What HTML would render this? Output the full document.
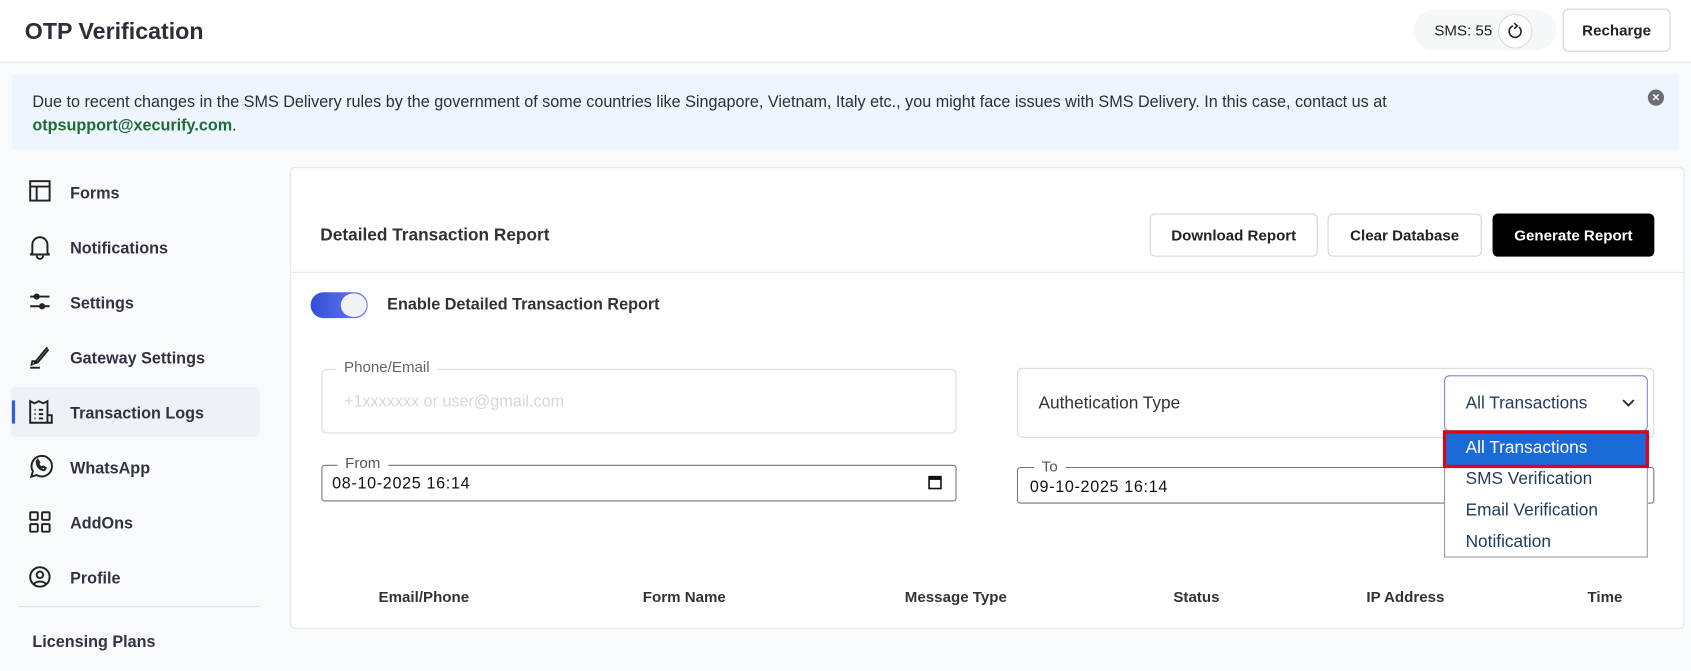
<!DOCTYPE html>
<html><head><meta charset="utf-8"><style>
*{box-sizing:border-box;margin:0;padding:0}
html,body{width:1691px;height:671px;overflow:hidden;background:#f8fafc}
#w{position:absolute;left:0;top:0;width:1568px;height:622px;transform:scale(1.07844);transform-origin:0 0;font-family:"Liberation Sans",sans-serif;color:#222;background:#f8fafd}
.a{position:absolute}
.b{font-weight:bold}
.nav{position:absolute;left:26px;font-size:15px;font-weight:bold;color:#2f3440}
.ic{position:absolute;left:26px}
.btn{position:absolute;top:198px;height:40px;border:1px solid #d0d4da;border-radius:5px;background:#fff;font-size:14px;font-weight:bold;display:flex;align-items:center;justify-content:center}
.th{position:absolute;top:545px;font-size:14px;font-weight:bold;color:#333}
</style></head><body><div id="w">
<div class="a" style="left:0;top:0;width:1568px;height:58px;background:#fff;border-bottom:1px solid #e6e8ec"></div>
<div class="a b" style="left:23px;top:17px;font-size:21.5px;color:#2a2f38">OTP Verification</div>
<div class="a" style="left:1311px;top:9px;width:132px;height:38px;border-radius:19px;background:#f6f7f9"></div>
<div class="a" style="left:1330px;top:20px;font-size:14px">SMS: 55</div>
<div class="a" style="left:1389px;top:13px;width:32px;height:32px;border-radius:50%;border:1px solid #d8dbe0;background:#fff"></div>
<svg class="a" style="left:1396px;top:20px" width="18" height="18" viewBox="0 0 18 18"><path d="M12.5 5A5.5 5.5 0 1 1 7 4" fill="none" stroke="#222" stroke-width="1.5"/><path d="M8 1.5l3 2.5-3 2.5" fill="none" stroke="#222" stroke-width="1.5"/></svg>
<div class="a b" style="left:1449px;top:8px;width:100px;height:40px;border:1px solid #d0d4da;border-radius:5px;background:#fff;font-size:14px;display:flex;align-items:center;justify-content:center">Recharge</div>
<div class="a" style="left:11px;top:69px;width:1546px;height:70px;background:#eef5fd"></div>
<div class="a" style="left:30px;top:84px;font-size:15px;line-height:22px;color:#2a2f38">Due to recent changes in the SMS Delivery rules by the government of some countries like Singapore, Vietnam, Italy etc., you might face issues with SMS Delivery. In this case, contact us at<br><span class="b" style="color:#1e6b38">otpsupport@xecurify.com</span>.</div>
<div class="a" style="left:1528px;top:83px;width:15px;height:15px;border-radius:50%;background:#6b6f75;color:#fff;font-size:12px;line-height:15px;text-align:center;font-weight:bold">×</div>
<div class="a" style="left:10px;top:359px;width:231px;height:46px;background:#eef1f6;border-radius:4px"></div>
<div class="a" style="left:11px;top:371px;width:3px;height:22px;background:#2f5ee0;border-radius:2px"></div>
<svg class="ic" style="top:166px" width="22" height="22" viewBox="0 0 22 22" fill="none" stroke="#222" stroke-width="1.8"><rect x="2" y="2" width="18" height="18"/><path d="M2 7h18M8 7v13"/></svg>
<div class="nav" style="left:65px;top:171px">Forms</div>
<svg class="ic" style="top:217px" width="22" height="24" viewBox="0 0 22 24" fill="none" stroke="#222" stroke-width="1.8"><path d="M4 18V10a7 7 0 0 1 14 0v8l2 1H2z"/><path d="M8 20a3 3 0 0 0 6 0"/></svg>
<div class="nav" style="left:65px;top:222px">Notifications</div>
<svg class="ic" style="top:270px" width="22" height="20" viewBox="0 0 22 20" stroke="#222" stroke-width="1.8"><path d="M2 5h18M2 14h18"/><circle cx="8" cy="5" r="2" fill="#222"/><circle cx="13" cy="14" r="2" fill="#222"/></svg>
<div class="nav" style="left:65px;top:273px">Settings</div>
<svg class="ic" style="top:320px" width="22" height="22" viewBox="0 0 22 22" fill="none" stroke="#222" stroke-width="1.8"><path d="M18 2L8 14l-2 3 3-1 10-12M3 19l1-4 4 0M2 21h9"/></svg>
<div class="nav" style="left:65px;top:324px">Gateway Settings</div>
<svg class="ic" style="top:368px" width="26" height="28" viewBox="0 0 26 28" fill="none" stroke="#222" stroke-width="1.8"><path d="M2 4l4 2 4-2 4 2 4-2v20H2zM18 17h4v7h-4"/><path d="M6 12h1M10 12h4M6 16h1M10 16h4M6 20h1M10 20h4"/></svg>
<div class="nav" style="left:65px;top:375px">Transaction Logs</div>
<svg class="ic" style="top:421px" width="23" height="23" viewBox="0 0 23 23" fill="none" stroke="#222" stroke-width="1.8"><path d="M3 21l1.5-5A9.5 9.5 0 1 1 8 19.5z"/><path d="M8 7c0 4 3 8 7 8l1.5-2-2.5-1.5-1 1c-1.5-.5-3-2-3.5-3.5l1-1L9 5.5z"/></svg>
<div class="nav" style="left:65px;top:426px">WhatsApp</div>
<svg class="ic" style="top:473px" width="22" height="22" viewBox="0 0 22 22" fill="none" stroke="#222" stroke-width="1.8"><rect x="2" y="2" width="7" height="7" rx="1"/><rect x="13" y="2" width="7" height="7" rx="1"/><rect x="2" y="13" width="7" height="7" rx="1"/><rect x="13" y="13" width="7" height="7" rx="1"/></svg>
<div class="nav" style="left:65px;top:477px">AddOns</div>
<svg class="ic" style="top:524px" width="22" height="22" viewBox="0 0 22 22" fill="none" stroke="#222" stroke-width="1.8"><circle cx="11" cy="11" r="9"/><circle cx="11" cy="9" r="3"/><path d="M5.5 17.5c2-3 9-3 11 0"/></svg>
<div class="nav" style="left:65px;top:528px">Profile</div>
<div class="a" style="left:17px;top:562px;width:224px;height:1px;background:#dcdfe4"></div>
<div class="nav" style="left:30px;top:587px">Licensing Plans</div>
<div class="a" style="left:269px;top:155px;width:1293px;height:428px;background:#fff;border:1px solid #e4e6ea;border-radius:4px"></div>
<div class="a" style="left:270px;top:252px;width:1292px;height:1px;background:#e4e6ea"></div>
<div class="a b" style="left:297px;top:210px;font-size:16px;color:#333">Detailed Transaction Report</div>
<div class="btn" style="left:1066px;width:156px">Download Report</div>
<div class="btn" style="left:1231px;width:143px">Clear Database</div>
<div class="btn" style="left:1384px;width:150px;background:#000;color:#fff;border-color:#000">Generate Report</div>
<div class="a" style="left:288px;top:271px;width:53px;height:24px;border-radius:12px;background:linear-gradient(90deg,#2f4fd8,#6d7cf0)"></div>
<div class="a" style="left:316px;top:272px;width:24px;height:22px;border-radius:50%;background:#f2f2f4"></div>
<div class="a b" style="left:359px;top:274px;font-size:15px;color:#333">Enable Detailed Transaction Report</div>
<div class="a" style="left:298px;top:342px;width:589px;height:60px;border:1px solid #d6dae0;border-radius:5px"></div>
<div class="a" style="left:312px;top:332px;padding:0 7px;background:#fff;font-size:14px;color:#666">Phone/Email</div>
<div class="a" style="left:319px;top:364px;font-size:15px;color:#d5d7db">+1xxxxxxx or user@gmail.com</div>
<div class="a" style="left:298px;top:431px;width:589px;height:34px;border:1px solid #767676;border-radius:3px"></div>
<div class="a" style="left:313px;top:421px;padding:0 7px;background:#fff;font-size:14px;color:#555">From</div>
<div class="a" style="left:308px;top:440px;font-size:15px;letter-spacing:.6px;color:#111">08-10-2025 16:14</div>
<svg class="a" style="left:860px;top:440px" width="14" height="14" viewBox="0 0 14 14"><rect x="1.5" y="2" width="11" height="11" fill="none" stroke="#111" stroke-width="1.5"/><rect x="1.5" y="2" width="11" height="3" fill="#111"/></svg>
<div class="a" style="left:943px;top:341px;width:591px;height:65px;border:1px solid #d6dae0;border-radius:5px"></div>
<div class="a" style="left:963px;top:366px;font-size:16px;color:#333">Authetication Type</div>
<div class="a" style="left:1339px;top:348px;width:189px;height:52px;border:1px solid #7a86d6;border-radius:5px"></div>
<div class="a" style="left:1359px;top:366px;font-size:16px;color:#1e3a5f">All Transactions</div>
<svg class="a" style="left:1503px;top:369px" width="14" height="10" viewBox="0 0 14 10"><path d="M2 2l5 5 5-5" fill="none" stroke="#333" stroke-width="1.8"/></svg>
<div class="a" style="left:943px;top:433px;width:591px;height:34px;border:1px solid #767676;border-radius:3px"></div>
<div class="a" style="left:959px;top:424px;padding:0 7px;background:#fff;font-size:14px;color:#555">To</div>
<div class="a" style="left:955px;top:443px;font-size:15px;letter-spacing:.6px;color:#111">09-10-2025 16:14</div>
<div class="a" style="left:1339px;top:399px;width:189px;height:118px;background:#fff;border:1px solid #999;border-top:none"></div>
<div class="a" style="left:1338px;top:399px;width:191px;height:35px;background:#1a6ad8;border:3px solid #e3001b"></div>
<div class="a" style="left:1359px;top:407px;font-size:16px;color:#fff">All Transactions</div>
<div class="a" style="left:1359px;top:436px;font-size:16px;color:#1e3a5f">SMS Verification</div>
<div class="a" style="left:1359px;top:465px;font-size:16px;color:#1e3a5f">Email Verification</div>
<div class="a" style="left:1359px;top:494px;font-size:16px;color:#1e3a5f">Notification</div>
<div class="th" style="left:351px">Email/Phone</div>
<div class="th" style="left:596px">Form Name</div>
<div class="th" style="left:839px">Message Type</div>
<div class="th" style="left:1088px">Status</div>
<div class="th" style="left:1267px">IP Address</div>
<div class="th" style="left:1472px">Time</div>
</div></body></html>
